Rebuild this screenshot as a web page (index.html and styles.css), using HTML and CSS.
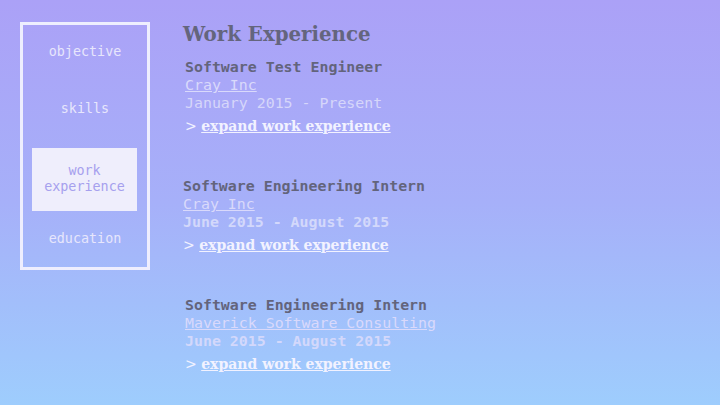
FILE: index.html
```html
<!DOCTYPE html>
<html>
<head>
<meta charset="utf-8">
<link rel="stylesheet" href="styles.css">
</head>
<body>
<div class="page">
  <nav class="nav">
    <div class="nav-item">objective</div>
    <div class="nav-item">skills</div>
    <div class="nav-item active">work<br>experience</div>
    <div class="nav-item last">education</div>
  </nav>
  <main class="main">
    <h1 class="heading">Work Experience</h1>
    <section class="job">
      <div class="title">Software Test Engineer</div>
      <a class="company" href="#">Cray Inc</a>
      <div class="dates">January 2015 - Present</div>
      <div class="expand">&gt; <a href="#">expand work experience</a></div>
    </section>
    <section class="job shifted">
      <div class="title">Software Engineering Intern</div>
      <a class="company" href="#">Cray Inc</a>
      <div class="dates bold">June 2015 - August 2015</div>
      <div class="expand">&gt; <a href="#">expand work experience</a></div>
    </section>
    <section class="job">
      <div class="title">Software Engineering Intern</div>
      <a class="company" href="#">Maverick Software Consulting</a>
      <div class="dates bold">June 2015 - August 2015</div>
      <div class="expand">&gt; <a href="#">expand work experience</a></div>
    </section>
  </main>
</div>
</body>
</html>
```
FILE: styles.css
```css
html, body {
  margin: 0;
  padding: 0;
}
body {
  width: 720px;
  height: 405px;
  overflow: hidden;
  background: linear-gradient(to bottom, #aba1f7 0%, #a6b0f9 50%, #9ecdfd 100%);
}
.page {
  display: flex;
  align-items: flex-start;
  padding: 22px 0 0 20px;
}
.nav {
  width: 130px;
  height: 248px;
  box-sizing: border-box;
  border: 3px solid #eeeefe;
  display: flex;
  flex-direction: column;
  padding-top: 3.5px;
  font-family: "DejaVu Sans Mono", monospace;
  font-size: 13.4px;
}
.nav-item {
  height: 47px;
  display: flex;
  align-items: center;
  justify-content: center;
  text-align: center;
  line-height: 16px;
  color: #e7e6fc;
  margin-bottom: 9.5px;
}
.nav-item.active {
  height: 63px;
  margin: 6px 10px 4.5px 9px;
  background: #efeefc;
  color: #a6a0ee;
}
.nav-item.last {
  margin-bottom: 0;
}
.main {
  margin-left: 32px;
  display: flex;
  flex-direction: column;
}
.heading {
  margin: -2px 0 10px 1px;
  font-family: "DejaVu Serif", "Liberation Serif", serif;
  font-weight: bold;
  font-size: 19.8px;
  line-height: 28px;
  color: #64657d;
}
.job {
  display: flex;
  flex-direction: column;
  align-items: flex-start;
  margin-left: 3px;
  margin-bottom: 42px;
  font-family: "DejaVu Sans Mono", monospace;
  font-size: 14.9px;
  line-height: 18px;
}
.job.shifted {
  margin-left: 1px;
}
.title {
  font-weight: bold;
  color: #63647c;
}
.company {
  color: #d9d9fb;
  text-decoration: underline;
}
.dates {
  color: #d6d6fa;
}
.dates.bold {
  font-weight: bold;
  color: #d3d8fb;
}
.expand {
  margin-top: 5px;
  font-family: "DejaVu Serif", "Liberation Serif", serif;
  font-size: 14px;
  line-height: 18px;
  color: #f2f2ff;
}
.expand a {
  color: #f2f2ff;
  font-weight: bold;
  text-decoration: underline;
}
```
